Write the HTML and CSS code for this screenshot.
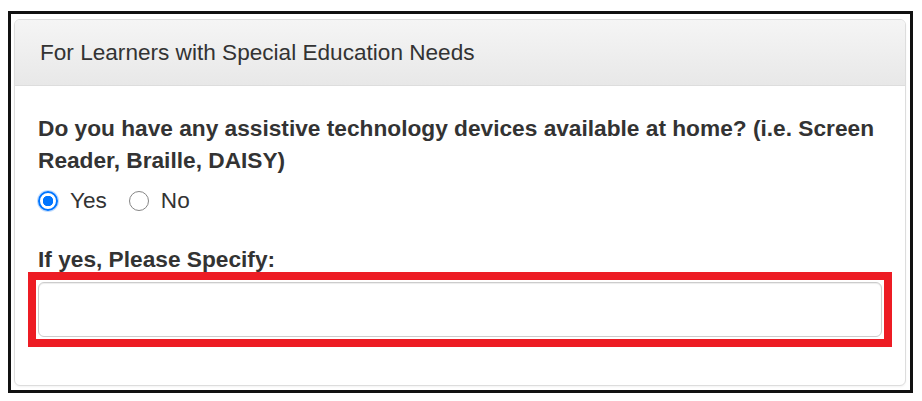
FILE: index.html
```html
<!DOCTYPE html>
<html lang="en">

<head>
    <meta charset="UTF-8">
    <meta name="viewport" content="width=device-width, initial-scale=1.0">
    <title>Special Education Needs</title>
    <link rel="stylesheet" href="styles.css">
</head>

<body>
    <div class="frame">
        <div class="panel">
            <div class="panel-heading">For Learners with Special Education Needs</div>
            <div class="panel-body">
                <label class="question">Do you have any assistive technology devices available at home? (i.e. Screen Reader, Braille, DAISY)</label>
                <div class="radio-group">
                    <label class="radio-option">
                        <input type="radio" name="assistive" value="yes" checked>
                        <span>Yes</span>
                    </label>
                    <label class="radio-option">
                        <input type="radio" name="assistive" value="no">
                        <span>No</span>
                    </label>
                </div>
                <label class="question specify" for="specify">If yes, Please Specify:</label>
                <div class="highlight">
                    <input type="text" id="specify" class="form-control">
                </div>
            </div>
        </div>
    </div>
</body>

</html>
```

FILE: styles.css
```css
* {
    box-sizing: border-box;
}

body {
    font-family: "Liberation Sans", Arial, sans-serif;
    background-color: #fff;
    color: #333;
    margin: 0;
    padding: 0;
}

.frame {
    margin: 11px 0 0 8px;
    width: 905px;
    height: 382px;
    border: 3px solid #111;
    padding: 5px 4px 4px 3px;
}

.panel {
    border: 1px solid #ddd;
    border-radius: 6px;
    background-color: #fff;
    box-shadow: 0 1px 2px rgba(0, 0, 0, 0.05);
}

.panel-heading {
    background: linear-gradient(#f5f5f5, #e8e8e8);
    border-bottom: 1px solid #ddd;
    border-radius: 5px 5px 0 0;
    padding: 16px 25px;
    font-size: 22.6px;
    line-height: 33px;
    color: #333;
}

.panel-body {
    padding: 26px 23px 24px 23px;
}

.question {
    display: block;
    font-size: 22.7px;
    font-weight: bold;
    line-height: 32px;
    color: #333;
}

.radio-group {
    display: flex;
    gap: 22px;
    margin-top: 9px;
    height: 32px;
    align-items: center;
}

.radio-option {
    display: inline-flex;
    align-items: center;
    gap: 12px;
    font-size: 22.6px;
    line-height: 32px;
    color: #333;
}

.radio-option input {
    appearance: none;
    -webkit-appearance: none;
    margin: 0;
    width: 20px;
    height: 20px;
    border: 1.5px solid #858585;
    border-radius: 50%;
    background-color: #fff;
}

.radio-option input:checked {
    border: 2px solid #0075ff;
    background: radial-gradient(circle, #0075ff 0, #0075ff 5px, #fff 5.5px);
    box-shadow: 0 0 0 1px rgba(0, 117, 255, 0.25);
}

.specify {
    margin-top: 29px;
    line-height: 26px;
}

.highlight {
    margin: 0 -10px 14px -10px;
    border: 8px solid #ed1c24;
    padding: 2px;
}

.form-control {
    display: block;
    width: 100%;
    height: 55px;
    border: 1px solid #ccc;
    border-radius: 6px;
    box-shadow: inset 0 1px 1px rgba(0, 0, 0, 0.075);
    font-size: 22.4px;
    padding: 10px 19px;
    outline: none;
}
```
